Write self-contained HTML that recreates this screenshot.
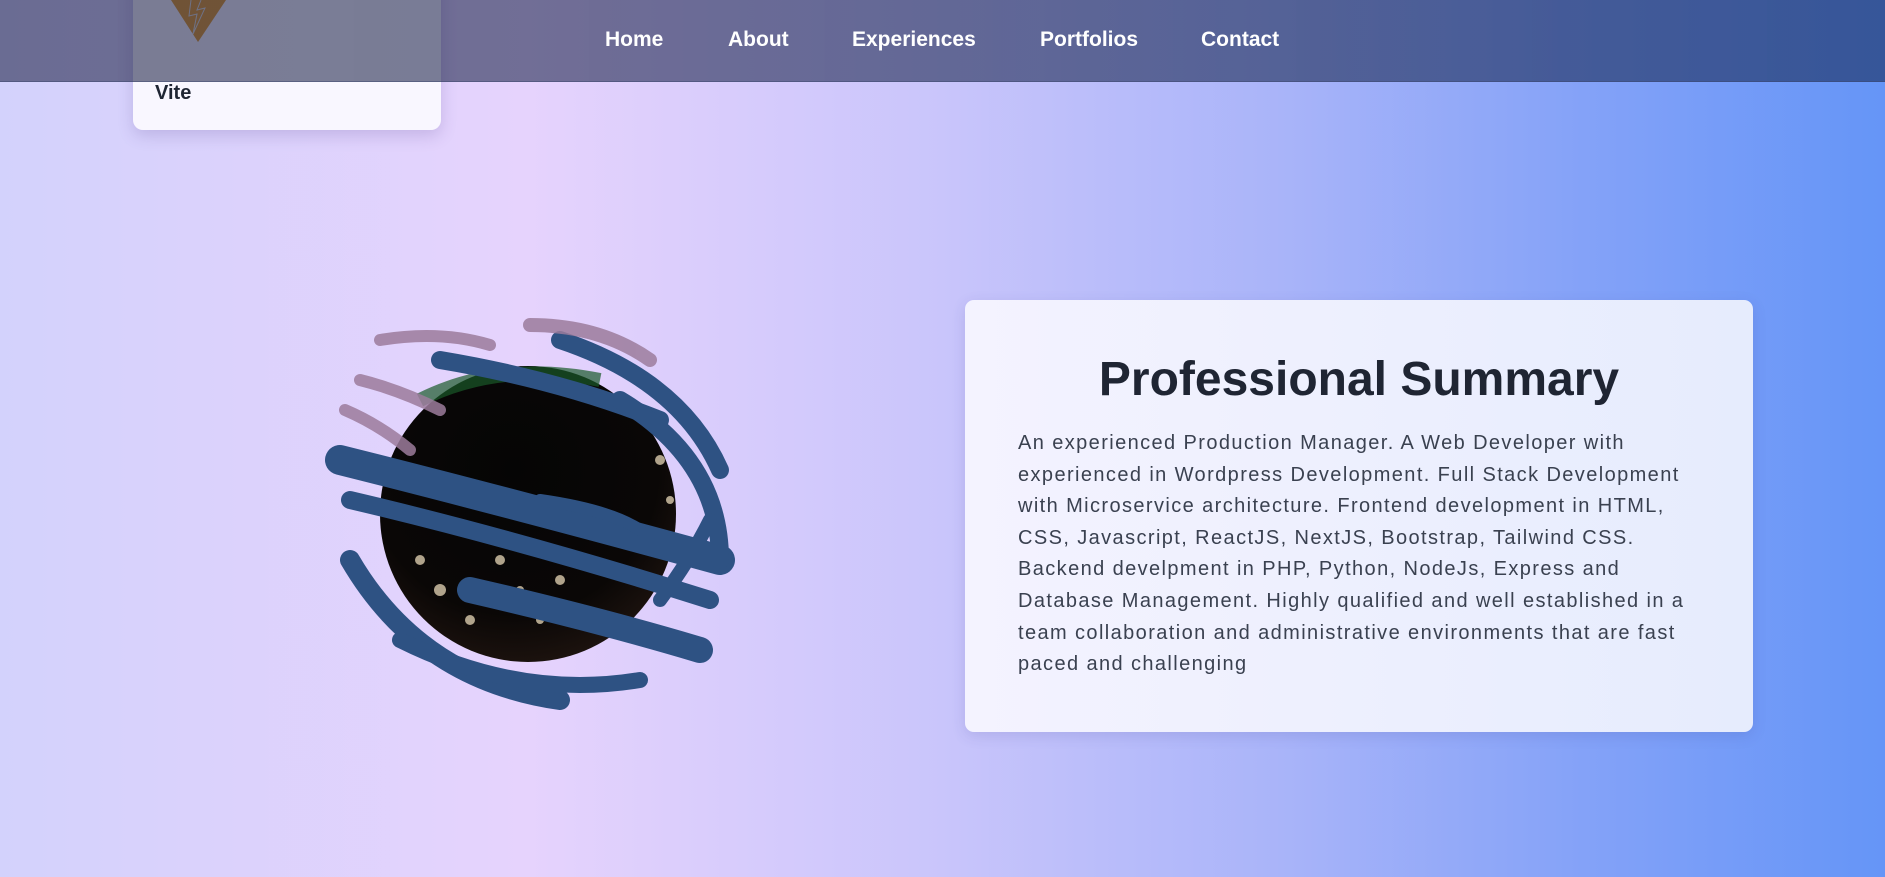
<!DOCTYPE html>
<html><head><meta charset="utf-8"><style>
*{margin:0;padding:0;box-sizing:border-box}
body{width:1885px;height:877px;overflow:hidden;font-family:"Liberation Sans",sans-serif;
background:linear-gradient(90deg,#d3d2fc 0%,#e6d3fd 28%,#c9c5fb 50%,#a9b4f9 68%,#84a2f8 84%,#6595f7 100%);position:relative}
.card{position:absolute;left:133px;top:-40px;width:308px;height:170px;background:#f9f7ff;border-radius:10px;box-shadow:0 6px 16px rgba(80,60,140,.2)}
.card .t{position:absolute;left:22px;top:122px;font-weight:bold;font-size:20px;color:#1f2533}
nav{position:absolute;left:0;top:0;width:1885px;height:82px;background:linear-gradient(90deg,rgba(20,24,60,.55),rgba(20,40,85,.58));border-bottom:1px solid rgba(60,70,110,.5)}
nav a{position:absolute;top:28px;color:#fff;font-weight:bold;font-size:21px;text-decoration:none}
.sum{position:absolute;left:965px;top:300px;width:788px;height:432px;border-radius:9px;background:linear-gradient(90deg,#f4f3ff,#e6ecfd);box-shadow:0 4px 14px rgba(60,60,140,.15)}
.sum h1{position:absolute;left:0;width:100%;text-align:center;top:52px;font-size:48px;color:#1f2533}
.sum p{position:absolute;left:53px;top:128px;width:700px;font-size:20px;letter-spacing:1.4px;line-height:31.6px;color:#3a4150}
</style></head><body>
<div class="card">
<svg style="position:absolute;left:38px;top:0" width="55" height="83" viewBox="0 0 55 83"><polygon points="0,40 55,40 27,82" fill="#e29a2c"/><path d="M20 40 L18 56 L26 54 L22 74 L34 48 L26 50 L30 40" fill="none" stroke="#ddd" stroke-width="1"/></svg>
<div class="t">Vite</div>
</div>
<nav>
<a style="left:605px">Home</a><a style="left:728px">About</a><a style="left:852px">Experiences</a><a style="left:1040px">Portfolios</a><a style="left:1201px">Contact</a>
</nav>
<svg style="position:absolute;left:320px;top:310px" width="420" height="420" viewBox="320 310 420 420">
<defs><radialGradient id="g" cx="0.45" cy="0.35" r="0.7"><stop offset="0" stop-color="#050505"/><stop offset="0.7" stop-color="#0a0706"/><stop offset="1" stop-color="#201510"/></radialGradient></defs>
<circle cx="528" cy="514" r="148" fill="url(#g)"/>
<path d="M420 400 Q500 360 600 380" stroke="#1a5a2a" stroke-width="14" fill="none" opacity=".7"/>
<g fill="#e8d8b8" opacity=".75"><circle cx="420" cy="560" r="5"/><circle cx="440" cy="590" r="6"/><circle cx="500" cy="560" r="5"/><circle cx="520" cy="590" r="4"/><circle cx="560" cy="580" r="5"/><circle cx="660" cy="460" r="5"/><circle cx="670" cy="500" r="4"/><circle cx="470" cy="620" r="5"/><circle cx="540" cy="620" r="4"/></g>
<g fill="none" stroke="#2e5283" stroke-linecap="round">
<path d="M340 460 Q500 500 720 560" stroke-width="30"/>
<path d="M350 500 Q520 540 710 600" stroke-width="18"/>
<path d="M470 590 Q600 620 700 650" stroke-width="26"/>
<path d="M350 560 Q420 680 560 700" stroke-width="20"/>
<path d="M400 640 Q520 700 640 680" stroke-width="16"/>
<path d="M440 360 Q560 380 660 420" stroke-width="18"/>
<path d="M560 340 Q680 380 720 470" stroke-width="18"/>
<path d="M620 400 Q720 460 720 560" stroke-width="18"/>
<path d="M540 500 Q610 510 640 530" stroke-width="12"/>
<path d="M660 600 Q690 560 710 520" stroke-width="14"/>
</g>
<g fill="none" stroke="#9c7c9c" stroke-linecap="round" opacity=".85">
<path d="M380 340 Q440 330 490 345" stroke-width="12"/>
<path d="M360 380 Q400 390 440 410" stroke-width="12"/>
<path d="M530 325 Q600 325 650 360" stroke-width="14"/>
<path d="M345 410 Q380 425 410 450" stroke-width="12"/>
</g>
</svg>
<div class="sum">
<h1>Professional Summary</h1>
<p>An experienced Production Manager. A Web Developer with experienced in Wordpress Development. Full Stack Development with Microservice architecture. Frontend development in HTML, CSS, Javascript, ReactJS, NextJS, Bootstrap, Tailwind CSS. Backend develpment in PHP, Python, NodeJs, Express and Database Management. Highly qualified and well established in a team collaboration and administrative environments that are fast paced and challenging</p>
</div>
</body></html>
